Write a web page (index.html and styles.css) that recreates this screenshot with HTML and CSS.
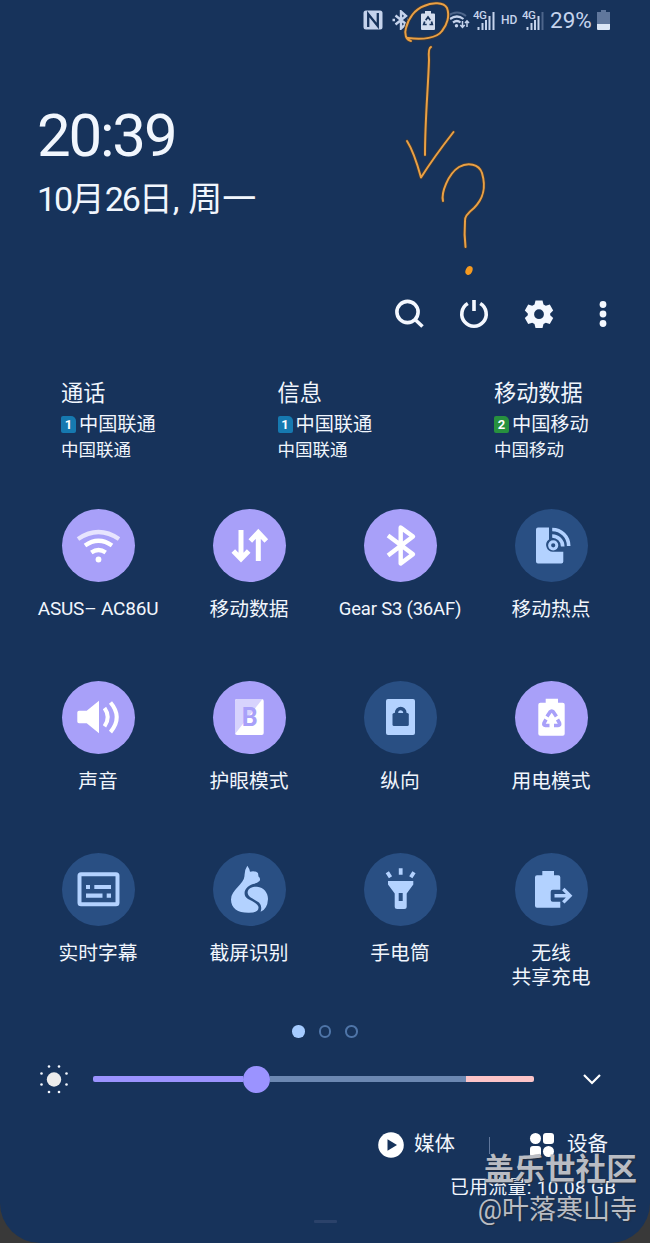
FILE: index.html
```
<!DOCTYPE html>
<html lang="zh-CN">
<head>
    <meta charset="UTF-8">
    <title>快捷设置面板</title>
    <link rel="stylesheet" href="styles.css">
</head>
<body>

<div class="panel">

    <!-- Status bar -->
    <div class="status-bar">
        <svg class="nfc" width="20" height="20" viewBox="0 0 20 20">
            <rect x="0.5" y="0.5" width="19" height="19" rx="2.5" fill="#c5d3ec"/>
            <path d="M5.2 17V4l9.6 12V3" fill="none" stroke="#17335b" stroke-width="2.3"/>
        </svg>
        <svg class="bt" width="18" height="20" viewBox="0 0 18 20">
            <path d="M3.500 5.500l10.500 8.500-5 4.500v-17L14 6 3.500 14.500M.5 10h2.500M15 10h2.500" fill="none" stroke="#c5d3ec" stroke-width="2.400"/>
        </svg>
        <svg class="saver" width="14" height="19" viewBox="0 0 14 19">
            <path d="M4 0h6v2.500h3q1 0 1 1V18q0 1-1 1H1q-1 0-1-1V3.500q0-1 1-1h3z" fill="#d3ddef"/>
            <path d="M4.700 9.200L7 6l2.300 3.200M10.500 10.500l.8 3H8.500M5.700 13.500h-3l1-3" fill="none" stroke="#17335b" stroke-width="1.700"/>
        </svg>
        <svg class="wifi-small" width="23" height="20" viewBox="0 0 23 20">
            <path d="M1 6Q10 -1 19 6" fill="none" stroke="#4d658a" stroke-width="2"/>
            <g fill="none" stroke="#c5d3ec" stroke-width="2.200">
                <path d="M3 9Q10 4 16.500 9M6 12.500Q10 9.500 13.500 12.500"/>
                <path d="M15.500 11v6M13.300 15l2.200 2.300 2.200-2.300M20 17v-6M18 13l2-2.200 2 2.200" stroke-width="1.500"/>
            </g>
            <circle cx="9.500" cy="15.700" r="1.700" fill="#c5d3ec"/>
        </svg>
        <svg class="signal" width="22" height="20" viewBox="0 0 22 20">
            <text x="0" y="9" class="net">4G</text>
            <path d="M5.500 17v3M9.500 13v7M13 10v10M16.500 6v14M20.500 2v18" stroke="#c5d3ec" stroke-width="2"/>
        </svg>
        <span class="hd">HD</span>
        <svg class="signal" width="22" height="20" viewBox="0 0 22 20">
            <text x="0" y="9" class="net">4G</text>
            <path d="M5.500 17v3M9.500 13v7M13 10v10M16.500 6v14" stroke="#c5d3ec" stroke-width="2"/>
            <path d="M20.500 2v18" stroke="#4d658a" stroke-width="2"/>
        </svg>
        <span class="percent">29%</span>
        <svg class="battery" width="13" height="20" viewBox="0 0 13 20">
            <path d="M4 0h5v2h4v12H0V2h4z" fill="#60779c"/>
            <path d="M0 14h13v5q0 1-1 1H1q-1 0-1-1z" fill="#dce6f5"/>
        </svg>
    </div>

    <div class="clock">
        <div class="time">20:39</div>
        <div class="date"><span>10</span>月<span>26</span>日<span class="comma">,</span>周一</div>
    </div>

    <div class="toolbar">
        <svg width="36" height="36" viewBox="0 0 36 36" fill="none" stroke="#f4f8ff" stroke-width="3.600">
            <circle cx="15.500" cy="16" r="10.600"/>
            <path d="M23 23.500l7.500 7"/>
        </svg>
        <svg width="36" height="36" viewBox="0 0 36 36" fill="none" stroke="#f4f8ff" stroke-width="3.600">
            <path d="M11.800 7.500a12.200 12.200 0 1 0 12.400 0M18 4V15"/>
        </svg>
        <svg width="36" height="36" viewBox="0 0 36 36">
            <path fill="#f4f8ff" fill-rule="evenodd" d="M14.500 4.500h7l1 4 2.300 1.300 4-1.200 3.400 6-3 2.800v1.800l3 2.800-3.400 6-4-1.200-2.300 1.300-1 3.900h-7l-1-3.900-2.300-1.300-4 1.200-3.400-6 3-2.800v-1.800l-3-2.800 3.400-6 4 1.200 2.300-1.300zM18 13.300a4.900 4.900 0 1 0 0 9.800 4.900 4.900 0 1 0 0-9.800z"/>
        </svg>
        <svg width="36" height="36" viewBox="0 0 36 36" fill="#f4f8ff">
            <circle cx="18" cy="8.500" r="3.400"/>
            <circle cx="18" cy="18" r="3.400"/>
            <circle cx="18" cy="27.500" r="3.400"/>
        </svg>
    </div>

    <!-- SIM card info -->
    <div class="sims">
        <div class="sim">
            <div class="sim-title">通话</div>
            <div class="sim-name"><span class="chip">1</span>中国联通</div>
            <div class="sim-sub">中国联通</div>
        </div>
        <div class="sim">
            <div class="sim-title">信息</div>
            <div class="sim-name"><span class="chip">1</span>中国联通</div>
            <div class="sim-sub">中国联通</div>
        </div>
        <div class="sim">
            <div class="sim-title">移动数据</div>
            <div class="sim-name"><span class="chip green">2</span>中国移动</div>
            <div class="sim-sub">中国移动</div>
        </div>
    </div>

    <!-- Quick setting tiles -->
    <div class="tiles">
        <div class="tile">
            <svg class="circle on" viewBox="0 0 73 73">
                <g fill="none" stroke="#fff" stroke-width="4.200">
                    <path d="M16 30Q36.500 16 57 30" stroke="#e7e4fe"/>
                    <path d="M23 36.500Q36.500 27 50 36.500M29.300 43.500Q36.500 38.500 43.700 43.500"/>
                </g>
                <circle cx="36.500" cy="50.500" r="2.900" fill="#fff"/>
            </svg>
            <div class="label latin">ASUS– AC86U</div>
        </div>
        <div class="tile">
            <svg class="circle on" viewBox="0 0 73 73">
                <path d="M28 21v29M20.300 42l7.700 8 7.700-8M45.300 52V24M37.300 32l8-8.500 8 8.500" fill="none" stroke="#fff" stroke-width="5"/>
            </svg>
            <div class="label">移动数据</div>
        </div>
        <div class="tile">
            <svg class="circle on" viewBox="0 0 73 73">
                <path d="M24 26.500l25 18.700-12.300 9.300v-36L49 27.500 24 46.500" fill="none" stroke="#fff" stroke-width="4.400" stroke-linejoin="round"/>
            </svg>
            <div class="label latin gear">Gear S3 (36AF)</div>
        </div>
        <div class="tile">
            <svg class="circle" viewBox="0 0 73 73">
                <path d="M23 18.500h11v12a6.800 6.800 0 0 0 4.500 12.300h9.800v9.700q0 2-2 2H23q-2 0-2-2v-32q0-2 2-2z" fill="#b3d2ff"/>
                <circle cx="38.200" cy="36.300" r="3.600" fill="#294f83" stroke="#b3d2ff" stroke-width="3"/>
                <path d="M37.200 27a10.500 10.500 0 0 1 10.500 10.500M37.200 20.500a16.500 16.500 0 0 1 16.500 16.500" fill="none" stroke="#b3d2ff" stroke-width="3.600"/>
            </svg>
            <div class="label">移动热点</div>
        </div>

        <div class="tile">
            <svg class="circle on" viewBox="0 0 73 73">
                <path d="M17 29.700h7.700L37 19.700v32.600l-12.300-10H17q-1.700 0-1.700-1.700v-9.200q0-1.700 1.700-1.700z" fill="#fff"/>
                <path d="M42.500 27q6.500 9.200 0 18.400M48.500 21.500q12.500 14.700 0 29.600" fill="none" stroke="#fff" stroke-width="4"/>
            </svg>
            <div class="label">声音</div>
        </div>
        <div class="tile">
            <svg class="circle on" viewBox="0 0 73 73">
                <rect x="22" y="18" width="28.700" height="36" rx="2" fill="#fff"/>
                <path d="M24 18h25.500L22 53V20q0-2 2-2z" fill="#d7d3fd"/>
                <text x="36.800" y="44.500" class="letter">B</text>
            </svg>
            <div class="label">护眼模式</div>
        </div>
        <div class="tile">
            <svg class="circle" viewBox="0 0 73 73">
                <rect x="22" y="18" width="29" height="36" rx="2" fill="#b3d2ff"/>
                <rect x="28.500" y="32" width="16.300" height="13" rx="1.500" fill="#294f83"/>
                <path d="M32.500 33v-1.300a4.200 4.200 0 0 1 8.400 0V33" fill="none" stroke="#294f83" stroke-width="3.400"/>
            </svg>
            <div class="label">纵向</div>
        </div>
        <div class="tile">
            <svg class="circle on" viewBox="0 0 73 73">
                <path d="M30.700 17.700H43v4h4.700q2 0 2 2v29q0 2-2 2H25.300q-2 0-2-2v-29q0-2 2-2h5.400z" fill="#fff"/>
                <path d="M32 35.500l3-4.500q1.700-2 3.400 0l3 4.500M42.500 38.500l2 3.500q.8 2.300-1.500 2.500h-4M34.500 44.500h-4q-2.300-.2-1.500-2.500l2-3.500" fill="none" stroke="#a8a0f9" stroke-width="3.600"/>
            </svg>
            <div class="label">用电模式</div>
        </div>

        <div class="tile">
            <svg class="circle" viewBox="0 0 73 73">
                <rect x="17.500" y="21.300" width="38" height="30" rx="1.500" fill="none" stroke="#b3d2ff" stroke-width="4"/>
                <path d="M24 34h4M32.300 34H49M24 42.700h16.500M44.700 42.700H49" stroke="#b3d2ff" stroke-width="4.200"/>
            </svg>
            <div class="label">实时字幕</div>
        </div>
        <div class="tile">
            <svg class="circle" viewBox="0 0 73 73">
                <g fill="#b3d2ff">
                    <path d="M34.300 12.700Q36.500 15.500 37 18.700Q42 17.500 45 20L45.500 23.500Q48 25.500 46.500 28Q44 30.500 40 31C31 34 29 42 35 46Q45 50.500 45.500 54Q46 59.800 36 59.800C25 60 18 55.500 18 46.500C18 37 31 31 31.500 23Q31.300 17 34.300 12.700z"/>
                    <path d="M34.600 39.500C35 35 40 33.500 44 33.800C51 34.500 55 40 55 46Q54.500 56 47.600 58.800Q49.500 53 46 49.500C41 45.500 35 45 34.600 39.500z"/>
                </g>
            </svg>
            <div class="label">截屏识别</div>
        </div>
        <div class="tile">
            <svg class="circle" viewBox="0 0 73 73">
                <path d="M36.700 15.300v6.500M23.300 19.300l3.200 5M50 19.300l-3.200 5" stroke="#b3d2ff" stroke-width="3.800"/>
                <path fill-rule="evenodd" d="M24 28h25.300v3.500l-6.600 9v13q0 2.500-2.500 2.500h-7q-2.500 0-2.500-2.500v-13l-6.700-9zM34.700 40v8h4v-8z" fill="#b3d2ff"/>
            </svg>
            <div class="label">手电筒</div>
        </div>
        <div class="tile">
            <svg class="circle" viewBox="0 0 73 73">
                <path d="M27.300 18H39v4.300h4.300q2 0 2 2v12.400h-7.600q-2 0-2 2v8q0 2 2 2h7.600v6H22q-2 0-2-2V24.300q0-2 2-2h5.300z" fill="#b3d2ff"/>
                <path d="M39.500 42.700h15M48.300 36l6.700 6.700-6.700 6.700" fill="none" stroke="#b3d2ff" stroke-width="3.400"/>
            </svg>
            <div class="label">无线<br>共享充电</div>
        </div>
    </div>

    <div class="pages">
        <span class="dot active"></span>
        <span class="dot"></span>
        <span class="dot"></span>
    </div>

    <!-- Brightness -->
    <div class="brightness">
        <svg class="sun" width="30" height="30" viewBox="0 0 30 30">
            <circle cx="15" cy="15.500" r="7.200" fill="#ececec"/>
            <g fill="#f4f8ff">
                <circle cx="10" cy="2.500" r="1.300"/><circle cx="20" cy="2.500" r="1.300"/>
                <circle cx="27.500" cy="9.500" r="1.300"/><circle cx="27.500" cy="20.500" r="1.300"/>
                <circle cx="20" cy="28" r="1.300"/><circle cx="10" cy="28" r="1.300"/>
                <circle cx="2.500" cy="20.500" r="1.300"/><circle cx="2.500" cy="9.500" r="1.300"/>
            </g>
        </svg>
        <div class="track">
            <div class="filled"></div>
            <div class="thumb"></div>
            <div class="rest"></div>
            <div class="high"></div>
        </div>
        <svg class="chevron" width="20" height="12" viewBox="0 0 20 12">
            <path d="M2 2l8 8 8-8" fill="none" stroke="#fff" stroke-width="2.200"/>
        </svg>
    </div>

    <div class="bottom">
        <svg width="26" height="26" viewBox="0 0 26 26">
            <circle cx="13" cy="13" r="12.800" fill="#fff"/>
            <path d="M9.500 7.200v11.600L19 13z" fill="#17335b"/>
        </svg>
        <span class="media">媒体</span>
        <span class="divider"></span>
        <svg width="26" height="26" viewBox="0 0 26 26" fill="#fff">
            <circle cx="6.500" cy="6.500" r="5.500"/>
            <rect x="14" y="1" width="11" height="11" rx="3"/>
            <rect x="1" y="14" width="11" height="11" rx="3"/>
            <circle cx="19.500" cy="19.500" r="5.500"/>
        </svg>
        <span class="device">设备</span>
    </div>
    <div class="usage">已用流量: 10.08 GB</div>
    <div class="handle"></div>

    <!-- Hand drawn marks -->
    <svg class="marks" width="650" height="290" viewBox="0 0 650 290">
        <defs>
            <g id="strokes">
                <path d="M411 41C406 40 404 34 406 28C408 19 415 9 424 6C432 2 444 2 447 8C450 16 447 25 442 31C437 38 423 40 408 38"/>
                <path d="M431 47Q428 48 429 60C428 90 425 120 425 155M407 141Q414 152 421 177.500Q434 157 453.500 132"/>
                <path d="M443 201C441 193 448 174 459 167C468 162 479 164 482 173C487 190 482 200 474 208Q464 216 465 221Q464 235 465.500 247"/>
            </g>
        </defs>
        <use href="#strokes" class="ink-edge"/>
        <use href="#strokes" class="ink"/>
        <ellipse cx="469" cy="270.500" rx="3.300" ry="4.600" transform="rotate(25 469 270.500)" fill="#f59a20"/>
    </svg>

    <div class="watermark">
        <div class="site">盖乐世社区</div>
        <div class="author">@叶落寒山寺</div>
    </div>
</div>

</body>
</html>
```

FILE: styles.css
```
body {
    margin: 0;
    background-color: #393939;
    font-family: Roboto, "Noto Sans CJK SC", sans-serif;
    color: #f1f6fd;
}

.panel {
    position: relative;
    box-sizing: border-box;
    width: 650px;
    height: 1243px;
    background-color: #17335b;
    border-radius: 0 0 40px 40px;
    overflow: hidden;
}

svg {
    display: block;
    flex: none;
}

/* status bar */
.status-bar {
    display: flex;
    align-items: center;
    height: 40px;
    padding-left: 363px;
    color: #c5d3ec;
}

.bt {
    margin-left: 9px;
}

.saver {
    margin-left: 11px;
}

.wifi-small {
    margin-left: 12px;
}

.signal {
    margin-left: 3px;
}

.net {
    font-size: 11.5px;
    font-weight: 500;
    letter-spacing: -0.5px;
    fill: #c5d3ec;
}

.hd {
    width: 17px;
    margin-left: 6px;
    margin-right: 1px;
    font-size: 12px;
    font-weight: 500;
}

.percent {
    width: 43px;
    margin-left: 6px;
    margin-right: 1px;
    font-size: 22.5px;
}

.battery {
    margin-left: 3px;
}

/* clock */
.clock {
    height: 180px;
    padding: 66px 0 0 37px;
    box-sizing: border-box;
}

.time {
    font-size: 60px;
    line-height: 60px;
    letter-spacing: -2.2px;
    white-space: nowrap;
}

.date {
    margin-top: 11px;
    font-family: "Noto Sans CJK SC", sans-serif;
    font-size: 34px;
    line-height: 40px;
    white-space: nowrap;
}

.date span {
    font-family: Roboto, sans-serif;
    font-size: 34px;
    letter-spacing: -2.2px;
}

.date .comma {
    margin-right: 11px;
}

.toolbar {
    display: flex;
    gap: 28.300px;
    padding: 76px 0 0 392px;
}

/* sim cards */
.sims {
    display: flex;
    height: 131px;
    padding: 46px 0 0 61px;
}

.sim {
    flex: none;
    width: 216.500px;
    white-space: nowrap;
}

.sim-title {
    font-size: 22.200px;
    line-height: 30px;
}

.sim-name {
    display: flex;
    align-items: center;
    gap: 3px;
    margin-top: 4px;
    font-size: 19.200px;
    line-height: 26px;
}

.sim-sub {
    font-size: 17.500px;
    line-height: 24px;
}

.chip {
    width: 15px;
    height: 17px;
    margin-top: -2px;
    background-color: #1679b0;
    border-radius: 2px 5px 2px 2px;
    color: #fff;
    font-size: 13px;
    font-weight: 700;
    line-height: 18px;
    text-align: center;
}

.chip.green {
    background-color: #27913e;
}

/* tiles */
.tiles {
    display: grid;
    grid-template-columns: repeat(4, 151px);
    grid-auto-rows: 172px;
    padding-left: 22.500px;
}

.tile {
    display: flex;
    flex-direction: column;
    align-items: center;
}

.circle {
    width: 73px;
    height: 73px;
    border-radius: 50%;
    background-color: #294f83;
}

.circle.on {
    background-color: #a8a0f9;
}

.letter {
    font-family: Roboto, sans-serif;
    font-size: 25px;
    font-weight: 700;
    text-anchor: middle;
    fill: #a8a0f9;
}

.label {
    margin-top: 16px;
    font-size: 19.800px;
    line-height: 24px;
    text-align: center;
    white-space: nowrap;
}

.label.latin {
    margin-top: 15px;
    font-size: 19px;
    letter-spacing: -0.2px;
}

.label.gear {
    font-size: 18.500px;
}

/* page dots */
.pages {
    display: flex;
    justify-content: center;
    gap: 14px;
    height: 13px;
}

.dot {
    box-sizing: border-box;
    width: 12.500px;
    height: 12.500px;
    border: 2px solid #4f75a8;
    border-radius: 50%;
}

.dot.active {
    border: none;
    background-color: #a5cbff;
}

/* brightness */
.brightness {
    display: flex;
    align-items: center;
    height: 30px;
    margin-top: 26px;
    padding-left: 38.500px;
}

.track {
    display: flex;
    align-items: center;
    width: 441px;
    margin: 0 48px 0 24.500px;
}

.filled {
    width: 150px;
    height: 6px;
    background-color: #9b93ff;
    border-radius: 2px 0 0 2px;
}

.thumb {
    width: 27px;
    height: 27px;
    background-color: #9b93ff;
    border-radius: 50%;
}

.rest {
    flex: 1;
    height: 6px;
    background-color: #6c88b2;
}

.high {
    width: 68px;
    height: 6px;
    background-color: #fcc4c8;
    border-radius: 0 2px 2px 0;
}

/* bottom row */
.bottom {
    display: flex;
    align-items: center;
    height: 32px;
    margin-top: 35px;
    padding-left: 378px;
    font-size: 20.500px;
    line-height: 28px;
    white-space: nowrap;
}

.media {
    margin-left: 10px;
    margin-top: -2px;
}

.divider {
    width: 1px;
    height: 17px;
    margin: 0 39px 0 34px;
    background-color: #60779c;
}

.device {
    margin-left: 12px;
    margin-top: -2px;
}

.usage {
    margin-top: 15px;
    padding-left: 450px;
    font-size: 18.800px;
    line-height: 24px;
    letter-spacing: 0.4px;
    white-space: nowrap;
}

.handle {
    width: 23px;
    height: 3px;
    margin: 20px auto 0;
    background-color: #2b426a;
    border-radius: 1px;
}

.marks {
    position: absolute;
    top: 0;
    left: 0;
}

.ink,
.ink-edge {
    fill: none;
    stroke: #eaa044;
    stroke-width: 2;
    stroke-linecap: round;
    stroke-linejoin: round;
}

.ink-edge {
    stroke: #3f3a38;
    stroke-width: 3.600;
}

.watermark {
    position: absolute;
    right: 13px;
    bottom: 14px;
    color: #b9bcc3;
    text-align: right;
    text-shadow: 1px 1px 1px #222c3c;
    white-space: nowrap;
}

.site {
    font-size: 30.700px;
    font-weight: 700;
    line-height: 42px;
}

.author {
    font-size: 27px;
    line-height: 38px;
}
```
